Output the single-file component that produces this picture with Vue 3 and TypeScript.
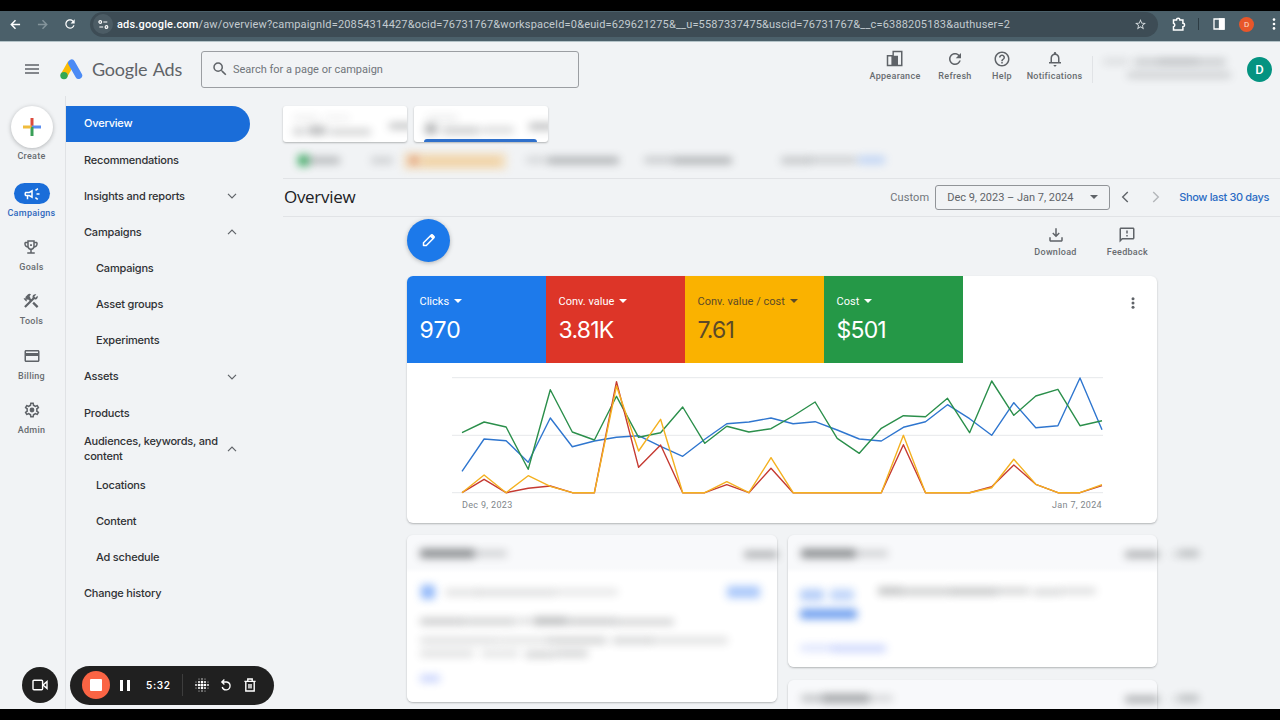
<script setup lang="ts">
interface NavItem {
  label: string
  child?: boolean
  active?: boolean
  chevron?: 'down' | 'up'
}
interface Smudge {
  x: number
  y: number
  w: number
  h: number
  c: string
  o: number
}

const icons: Record<string, string> = {
  search:
    'M15.5 14h-.79l-.28-.27A6.471 6.471 0 0 0 16 9.5 6.5 6.5 0 1 0 9.5 16c1.61 0 3.09-.59 4.23-1.57l.27.28v.79l5 4.99L20.49 19l-4.99-5zm-6 0C7.01 14 5 11.99 5 9.5S7.01 5 9.5 5 14 7.01 14 9.5 11.99 14 9.5 14z',
  reload:
    'M17.65 6.35C16.2 4.9 14.21 4 12 4c-4.42 0-7.99 3.58-7.99 8s3.57 8 7.99 8c3.73 0 6.84-2.55 7.73-6h-2.08c-.82 2.33-3.04 4-5.65 4-3.31 0-6-2.69-6-6s2.69-6 6-6c1.66 0 3.14.69 4.22 1.78L13 11h7V4l-2.35 2.35z',
  help:
    'M11 18h2v-2h-2v2zm1-16C6.48 2 2 6.48 2 12s4.48 10 10 10 10-4.48 10-10S17.52 2 12 2zm0 18c-4.41 0-8-3.59-8-8s3.59-8 8-8 8 3.59 8 8-3.59 8-8 8zm0-14c-2.21 0-4 1.79-4 4h2c0-1.1.9-2 2-2s2 .9 2 2c0 2-3 1.75-3 5h2c0-2.25 3-2.5 3-5 0-2.21-1.79-4-4-4z',
  bell:
    'M12 22c1.1 0 2-.9 2-2h-4c0 1.1.9 2 2 2zm6-6v-5c0-3.07-1.63-5.64-4.5-6.32V4c0-.83-.67-1.5-1.5-1.5s-1.5.67-1.5 1.5v.68C7.64 5.36 6 7.92 6 11v5H4v2h16v-2h-2zm-2 0H8v-5c0-2.48 1.51-4.5 4-4.5s4 2.02 4 4.5v5z',
  appearance:
    'M8.6 1h13.4v20.5H1V6.5h7.6zM10.5 3v4.5h5.5v12h4V3zM3 8.5v11h4.2v-11z',
  campaigns:
    'M18 11v2h4v-2h-4zm-2 6.61c.96.71 2.21 1.65 3.2 2.39.4-.53.8-1.07 1.2-1.6-.99-.74-2.24-1.68-3.2-2.4-.4.54-.8 1.08-1.2 1.61zM20.4 5.6c-.4-.53-.8-1.07-1.2-1.6-.99.74-2.24 1.68-3.2 2.4.4.53.8 1.07 1.2 1.6.96-.72 2.21-1.65 3.2-2.4zM4 9c-1.1 0-2 .9-2 2v2c0 1.1.9 2 2 2h1v4h2v-4h1l5 3V6L8 9H4zm5.03 1.71L11 9.53v4.94l-1.97-1.18-.48-.29H4v-2h4.55l.48-.29z',
  goals:
    'M19 5h-2V3H7v2H5c-1.1 0-2 .9-2 2v1c0 2.55 1.92 4.63 4.39 4.94.63 1.5 1.98 2.63 3.61 2.96V19H7v2h10v-2h-4v-3.1c1.63-.33 2.98-1.46 3.61-2.96C19.08 12.63 21 10.55 21 8V7c0-1.1-.9-2-2-2zM5 8V7h2v3.82C5.84 10.4 5 9.3 5 8zm7 6c-1.65 0-3-1.35-3-3V5h6v6c0 1.65-1.35 3-3 3zm7-6c0 1.3-.84 2.4-2 2.82V7h2v1zM10.8 8.3h2.4v2.4h-2.4z',
  tools:
    'M13.783 15.172l2.121-2.121 5.996 5.996-2.121 2.121zM17.5 10c1.93 0 3.5-1.57 3.5-3.5 0-.58-.16-1.12-.41-1.6l-2.7 2.7-1.49-1.49 2.7-2.7c-.48-.25-1.02-.41-1.6-.41C15.57 3 14 4.57 14 6.5c0 .41.08.8.21 1.16l-1.85 1.85-1.78-1.78.71-.71-1.41-1.41L12 3.49a3 3 0 0 0-4.24 0L4.22 7.03l1.41 1.41H2.81l-.71.71 3.54 3.54.71-.71V9.15l1.41 1.41.71-.71 1.78 1.78-7.41 7.41 2.12 2.12L16.34 9.79c.36.13.75.21 1.16.21z',
  billing:
    'M20 4H4c-1.11 0-1.99.89-1.99 2L2 18c0 1.11.89 2 2 2h16c1.11 0 2-.89 2-2V6c0-1.11-.89-2-2-2zm0 14H4v-6h16v6zm0-10H4V6h16v2z',
  admin:
    'M19.43 12.98c.04-.32.07-.64.07-.98s-.03-.66-.07-.98l2.11-1.65c.19-.15.24-.42.12-.64l-2-3.46c-.09-.16-.26-.25-.44-.25-.06 0-.12.01-.17.03l-2.49 1c-.52-.4-1.08-.73-1.69-.98l-.38-2.65C14.46 2.18 14.25 2 14 2h-4c-.25 0-.46.18-.49.42l-.38 2.65c-.61.25-1.17.59-1.69.98l-2.49-1c-.06-.02-.12-.03-.18-.03-.17 0-.34.09-.43.25l-2 3.46c-.13.22-.07.49.12.64l2.11 1.65c-.04.32-.07.65-.07.98s.03.66.07.98l-2.11 1.65c-.19.15-.24.42-.12.64l2 3.46c.09.16.26.25.44.25.06 0 .12-.01.17-.03l2.49-1c.52.4 1.08.73 1.69.98l.38 2.65c.03.24.24.42.49.42h4c.25 0 .46-.18.49-.42l.38-2.65c.61-.25 1.17-.59 1.69-.98l2.49 1c.06.02.12.03.18.03.17 0 .34-.09.43-.25l2-3.46c.12-.22.07-.49-.12-.64l-2.11-1.65zm-1.98-1.71c.04.31.05.52.05.73 0 .21-.02.43-.05.73l-.14 1.13.89.7 1.08.84-.7 1.21-1.27-.51-1.04-.42-.9.68c-.43.32-.84.56-1.25.73l-1.06.43-.16 1.13-.2 1.35h-1.4l-.19-1.35-.16-1.13-1.06-.43c-.43-.18-.83-.41-1.23-.71l-.91-.7-1.06.43-1.27.51-.7-1.21 1.08-.84.89-.7-.14-1.13c-.03-.31-.05-.54-.05-.74s.02-.43.05-.73l.14-1.13-.89-.7-1.08-.84.7-1.21 1.27.51 1.04.42.9-.68c.43-.32.84-.56 1.25-.73l1.06-.43.16-1.13.2-1.35h1.39l.19 1.35.16 1.13 1.06.43c.43.18.83.41 1.23.71l.91.7 1.06-.43 1.27-.51.7 1.21-1.07.85-.89.7.14 1.13zM12 8.8a3.2 3.2 0 1 0 0 6.4 3.2 3.2 0 0 0 0-6.4z',
  star:
    'M22 9.24l-7.19-.62L12 2 9.19 8.63 2 9.24l5.46 4.73L5.82 21 12 17.27 18.18 21l-1.63-7.03L22 9.24zM12 15.4l-3.76 2.27 1-4.28-3.32-2.88 4.38-.38L12 6.1l1.71 4.04 4.38.38-3.32 2.88 1 4.28L12 15.4z',
  feedback:
    'M20 2H4c-1.1 0-1.99.9-1.99 2L2 22l4-4h14c1.1 0 2-.9 2-2V4c0-1.1-.9-2-2-2zm0 14H5.17L4 17.17V4h16v12zM11 12h2v2h-2zm0-6h2v4h-2z',
  download:
    'M11 3h2v8.2l2.6-2.6L17 10l-5 5-5-5 1.4-1.4 2.6 2.6zM3 15h2v4h14v-4h2v4c0 1.1-.9 2-2 2H5c-1.1 0-2-.9-2-2z',
}

const headerTools = [
  { icon: 'appearance', label: 'Appearance', cls: 't-appearance' },
  { icon: 'reload', label: 'Refresh', cls: 't-refresh' },
  { icon: 'help', label: 'Help', cls: 't-help' },
  { icon: 'bell', label: 'Notifications', cls: 't-bell' },
]

const rail = [
  { icon: 'goals', label: 'Goals' },
  { icon: 'tools', label: 'Tools' },
  { icon: 'billing', label: 'Billing' },
  { icon: 'admin', label: 'Admin' },
]

const nav: NavItem[] = [
  { label: 'Overview', active: true },
  { label: 'Recommendations' },
  { label: 'Insights and reports', chevron: 'down' },
  { label: 'Campaigns', chevron: 'up' },
  { label: 'Campaigns', child: true },
  { label: 'Asset groups', child: true },
  { label: 'Experiments', child: true },
  { label: 'Assets', chevron: 'down' },
  { label: 'Products' },
  { label: 'Audiences, keywords, and content', chevron: 'up' },
  { label: 'Locations', child: true },
  { label: 'Content', child: true },
  { label: 'Ad schedule', child: true },
  { label: 'Change history' },
]

const metrics = [
  { label: 'Clicks', value: '970', cls: 'blue' },
  { label: 'Conv. value', value: '3.81K', cls: 'red' },
  { label: 'Conv. value / cost', value: '7.61', cls: 'yellow' },
  { label: 'Cost', value: '$501', cls: 'green' },
]

const baseline = 129.7
const series: { color: string; values: number[] }[] = [
  {
    color: '#2f76cf',
    values: [
      108.3, 76, 77.7, 99.3, 55, 83.7, 78, 74.3, 72.7, 83.3, 93.3, 76.3, 60.7, 59, 55, 60.7, 58.7,
      67, 76, 78, 64.3, 58.7, 41.7, 55.7, 72.3, 39.7, 64.7, 62.7, 15, 66.7,
    ],
  },
  {
    color: '#2b8f4b',
    values: [
      69.7, 59, 64, 106.3, 26.7, 69, 77, 33.3, 74.3, 69.7, 44, 80.3, 63.3, 69, 65.7, 53, 39, 75.3,
      90.3, 65.3, 52.7, 53.7, 35.3, 69.7, 18, 52.3, 33, 26.3, 62.7, 57.7,
    ],
  },
  {
    color: '#c53a32',
    values: [
      baseline, 116.3, baseline, 125.3, 123, baseline, baseline, 18.7, 104.3, 82, baseline, baseline,
      121.7, baseline, 105.3, baseline, baseline, baseline, baseline, baseline, 81.7, baseline,
      baseline, baseline, 123.7, 102, 121.3, baseline, baseline, 122.7,
    ],
  },
  {
    color: '#f4b120',
    values: [
      baseline, 112, baseline, 112.7, 123.3, baseline, baseline, 23, 88, 56.3, baseline, baseline,
      118.7, baseline, 94.7, baseline, baseline, baseline, baseline, baseline, 72.3, baseline,
      baseline, baseline, 124.7, 96.3, 121.3, baseline, baseline, 121.7,
    ],
  },
]
const toPoints = (values: number[]): string =>
  values.map((v, i) => `${(55 + i * 22.07).toFixed(1)},${v}`).join(' ')

const s = (x: number, y: number, w: number, h: number, o: number, c = '#3c4043'): Smudge => ({
  x, y, w, h, c, o,
})

const account = [s(5, 8, 26, 5, 0.16), s(36, 8, 92, 6, 0.26), s(29, 21, 104, 6, 0.22), s(60, 7, 40, 6, 0.1)]
const tabOne = [s(10, 10, 26, 4, 0.12), s(40, 10, 27, 4, 0.1), s(10, 22, 12, 7, 0.26), s(25, 20, 18, 9, 0.36), s(46, 23, 42, 6, 0.26), s(106, 17, 26, 6, 0.34)]
const tabTwo = [s(12, 10, 32, 4, 0.14), s(11, 18, 12, 10, 0.42), s(28, 21, 38, 7, 0.28), s(68, 21, 32, 6, 0.22), s(115, 17, 26, 7, 0.34)]
const status = [
  s(15, 3, 11, 11, 0.85, '#1e9e4a'), s(25, 5, 32, 7, 0.34), s(88, 5, 22, 7, 0.2),
  s(120, 0, 104, 18, 0.22, '#fbb03b'), s(126, 4, 10, 9, 0.5, '#d4622a'), s(138, 6, 80, 7, 0.34, '#e9a23b'),
  s(243, 5, 20, 6, 0.18), s(264, 5, 72, 7, 0.38), s(361, 5, 30, 6, 0.26), s(390, 5, 59, 7, 0.38),
  s(498, 5, 30, 7, 0.26), s(526, 5, 48, 6, 0.23), s(575, 4, 27, 8, 0.28, '#4285f4'),
]
const cardHead = [s(13, 14, 55, 9, 0.6), s(68, 15, 32, 7, 0.22), s(337, 16, 34, 7, 0.42)]
const cardHeadWide = [...cardHead, s(383, 17, 6, 5, 0.14), s(390, 15, 21, 7, 0.32)]
const optimisation = [
  s(14, 50, 14, 14, 0.62, '#4c8bf5'), s(38, 54, 34, 7, 0.16), s(70, 54, 78, 7, 0.18), s(147, 54, 64, 6, 0.15),
  s(320, 51, 33, 12, 0.48, '#4c8bf5'),
  s(13, 83, 44, 7, 0.28), s(56, 83, 54, 7, 0.24), s(112, 83, 12, 6, 0.22), s(126, 82, 35, 8, 0.36), s(161, 83, 49, 7, 0.28), s(209, 84, 58, 6, 0.26),
  s(13, 102, 78, 7, 0.17), s(91, 102, 50, 7, 0.15), s(140, 102, 60, 7, 0.24), s(205, 102, 40, 7, 0.22), s(243, 102, 78, 7, 0.16),
  s(13, 115, 54, 7, 0.17), s(74, 115, 38, 7, 0.15), s(118, 116, 30, 7, 0.24), s(148, 115, 33, 7, 0.24),
  s(13, 140, 20, 7, 0.32, '#4c6ff5'),
]
const score = [
  s(12, 54, 24, 12, 0.38, '#3f7fee'), s(42, 54, 24, 12, 0.32, '#3f7fee'), s(12, 74, 57, 10, 0.7, '#2f74e8'),
  s(90, 52, 24, 8, 0.32), s(113, 53, 50, 7, 0.27), s(162, 53, 47, 7, 0.32), s(208, 53, 34, 6, 0.26), s(245, 54, 28, 6, 0.24), s(272, 53, 36, 6, 0.2),
  s(12, 110, 34, 6, 0.22, '#4c6ff5'), s(44, 110, 54, 7, 0.3, '#4c6ff5'),
]
const lastHead = [s(13, 15, 24, 7, 0.3), s(35, 14, 46, 9, 0.46), s(79, 15, 26, 7, 0.18), s(337, 16, 34, 7, 0.42), s(383, 17, 6, 5, 0.14), s(390, 15, 21, 7, 0.32)]
const dots = [
  [0, -6, 0.7], [-3, -6, 0.5], [3, -6, 0.5], [-6, 0, 0.9], [6, 0, 0.9], [-6, -3, 0.5], [6, -3, 0.5], [-6, 3, 0.5], [6, 3, 0.5],
  [-3, -3, 1], [0, -3, 1.3], [3, -3, 1], [-3, 0, 1.3], [0, 0, 1.6], [3, 0, 1.3], [-3, 3, 1], [0, 3, 1.3], [3, 3, 1],
  [0, 6, 0.7], [-3, 6, 0.5], [3, 6, 0.5],
]
</script>

<template>
  <div class="screen">
    <div class="browser">
      <svg class="b-back" viewBox="0 0 12 12"><path d="M11 6H1.5M6 1.3L1.4 6 6 10.7" /></svg>
      <svg class="b-forward" viewBox="0 0 12 12"><path d="M1 6h9.5M6 1.3L10.6 6 6 10.7" /></svg>
      <svg class="b-reload" viewBox="0 0 24 24"><path :d="icons.reload" /></svg>
      <div class="omnibox">
        <span class="site-info">
          <svg viewBox="0 0 12 10"><circle cx="2.4" cy="2.2" r="1.5" /><path d="M5.8 2.2h4.4M1.4 7.8h4.2" /><circle cx="9.3" cy="7.8" r="1.5" /></svg>
        </span>
        <span class="url"><b>ads.google.com</b>/aw/overview?campaignId=20854314427&amp;ocid=76731767&amp;workspaceId=0&amp;euid=629621275&amp;__u=5587337475&amp;uscid=76731767&amp;__c=6388205183&amp;authuser=2</span>
        <svg class="b-star" viewBox="0 0 24 24"><path :d="icons.star" /></svg>
      </div>
      <svg class="b-puzzle" viewBox="0 0 14 14"><path d="M1.5 3h3a1.7 1.7 0 0 1 3.4 0h3v3.3a1.7 1.7 0 0 1 0 3.4V13H1.5V9.8a1.9 1.9 0 0 0 0-3.6z" /></svg>
      <span class="b-rule"></span>
      <svg class="b-panel" viewBox="0 0 12 12"><path d="M1 1h10v10H1z" fill="none" /><path d="M6.5 1H11v10H6.5z" fill="#fff" /></svg>
      <span class="b-avatar">D</span>
      <svg class="b-more" viewBox="0 0 4 12"><circle cx="2" cy="1.6" r="1.3" /><circle cx="2" cy="6" r="1.3" /><circle cx="2" cy="10.4" r="1.3" /></svg>
    </div>

    <div class="app">
      <header class="header">
        <svg class="menu" viewBox="0 0 14 10"><path d="M0 1h14M0 5h14M0 9h14" /></svg>
        <svg class="logo" viewBox="0 0 23 21">
          <path d="M11 4.2L4 16.5" stroke="#fbbc04" stroke-width="7" />
          <path d="M11.6 4L18.7 16.4" stroke="#4c8bf5" stroke-width="7" stroke-linecap="round" />
          <circle cx="4" cy="16.6" r="3.7" fill="#34a853" />
        </svg>
        <span class="brand">Google <i>Ads</i></span>
        <div class="searchbox">
          <svg viewBox="0 0 24 24"><path :d="icons.search" /></svg>
          <span>Search for a page or campaign</span>
        </div>
        <div class="tools">
          <div v-for="t in headerTools" :key="t.label" class="tool" :class="t.cls">
            <svg viewBox="0 0 24 24"><path fill-rule="evenodd" :d="icons[t.icon]" /></svg>
            <span>{{ t.label }}</span>
          </div>
        </div>
        <span class="h-rule"></span>
        <svg class="account smudges" viewBox="0 0 140 36"><rect v-for="(r, i) in account" :key="i" :x="r.x" :y="r.y" :width="r.w" :height="r.h" :fill="r.c" :opacity="r.o" rx="2" /></svg>
        <span class="avatar">D</span>
      </header>

      <div class="body">
        <aside class="rail">
          <div class="create">
            <svg viewBox="0 0 18 18">
              <path d="M7.5 0h3v9h-3z" fill="#dc4a3d" /><path d="M9 7.5h9v3H9z" fill="#5b8def" />
              <path d="M7.5 9h3v9h-3z" fill="#3a9f58" /><path d="M0 7.5h9l-1.5 3H0z" fill="#f0bc3c" />
            </svg>
          </div>
          <span class="rail-label">Create</span>
          <div class="pill"><svg viewBox="0 0 24 24"><path :d="icons.campaigns" /></svg></div>
          <span class="rail-label on">Campaigns</span>
          <div v-for="r in rail" :key="r.label" class="rail-item">
            <svg viewBox="0 0 24 24"><path :d="icons[r.icon]" /></svg>
            <span class="rail-label">{{ r.label }}</span>
          </div>
        </aside>

        <nav class="nav">
          <div v-for="(n, i) in nav" :key="i" class="nav-item" :class="{ active: n.active, child: n.child }">
            <span>{{ n.label }}</span>
            <svg v-if="n.chevron" viewBox="0 0 10 6"><path :d="n.chevron === 'down' ? 'M1 .8L5 4.8 9 .8' : 'M1 5.2L5 1.2 9 5.2'" /></svg>
          </div>
        </nav>

        <main class="main">
          <div class="tabs">
            <div class="tab"><svg class="smudges" viewBox="0 0 125 36"><rect v-for="(r, i) in tabOne" :key="i" :x="r.x" :y="r.y" :width="r.w" :height="r.h" :fill="r.c" :opacity="r.o" rx="2" /></svg></div>
            <div class="tab second"><svg class="smudges" viewBox="0 0 134 36"><rect v-for="(r, i) in tabTwo" :key="i" :x="r.x" :y="r.y" :width="r.w" :height="r.h" :fill="r.c" :opacity="r.o" rx="2" /></svg><span class="underline"></span></div>
          </div>
          <div class="status"><svg class="smudges" viewBox="0 0 620 18"><rect v-for="(r, i) in status" :key="i" :x="r.x" :y="r.y" :width="r.w" :height="r.h" :fill="r.c" :opacity="r.o" rx="2" /></svg></div>

          <div class="titlebar">
            <h1>Overview</h1>
            <span class="custom">Custom</span>
            <div class="range"><span>Dec 9, 2023 – Jan 7, 2024</span><svg viewBox="0 0 8 4"><path d="M0 0h8L4 4z" /></svg></div>
            <svg class="step" viewBox="0 0 8 13"><path d="M7 1L1.5 6.5 7 12" /></svg>
            <svg class="step off" viewBox="0 0 8 13"><path d="M1 1l5.5 5.5L1 12" /></svg>
            <a>Show last 30 days</a>
          </div>

          <div class="content">
            <div class="actions">
              <div class="fab"><svg viewBox="0 0 24 24"><path d="M4 20v-4.5L16 3.6a1.7 1.7 0 0 1 2.4 0l2 2a1.7 1.7 0 0 1 0 2.4L8.5 20z" fill="none" stroke="#fff" stroke-width="2.4" stroke-linejoin="round" /><path d="M14.2 5.4L17 2.7a1.8 1.8 0 0 1 2.4 0l2 2a1.8 1.8 0 0 1 0 2.4l-2.7 2.7z" fill="#fff" /></svg></div>
              <div class="action download"><svg viewBox="0 0 24 24"><path :d="icons.download" /></svg><span>Download</span></div>
              <div class="action"><svg viewBox="0 0 24 24"><path :d="icons.feedback" /></svg><span>Feedback</span></div>
            </div>

            <section class="card summary">
              <div class="metrics">
                <div v-for="m in metrics" :key="m.label" class="metric" :class="m.cls">
                  <div class="m-label">{{ m.label }}<svg viewBox="0 0 8 4"><path d="M0 0h8L4 4z" /></svg></div>
                  <div class="m-value">{{ m.value }}</div>
                </div>
                <svg class="kebab" viewBox="0 0 4 12"><circle cx="2" cy="1.7" r="1.5" /><circle cx="2" cy="6" r="1.5" /><circle cx="2" cy="10.3" r="1.5" /></svg>
              </div>
              <svg class="chart" viewBox="0 0 750 135">
                <path d="M45 14.7h651M45 72.3h651M45 129.7h651" stroke="#e6e8ea" stroke-width="1" />
                <polyline v-for="l in series" :key="l.color" :points="toPoints(l.values)" :stroke="l.color" />
              </svg>
              <div class="axis"><span>Dec 9, 2023</span><span>Jan 7, 2024</span></div>
            </section>

            <div class="columns">
              <section class="card tall"><svg class="smudges" viewBox="0 0 370 167"><rect v-for="(r, i) in [...cardHead, ...optimisation]" :key="i" :x="r.x" :y="r.y" :width="r.w" :height="r.h" :fill="r.c" :opacity="r.o" rx="2" /></svg></section>
              <div class="column">
                <section class="card short"><svg class="smudges" viewBox="0 0 370 167"><rect v-for="(r, i) in [...cardHeadWide, ...score]" :key="i" :x="r.x" :y="r.y" :width="r.w" :height="r.h" :fill="r.c" :opacity="r.o" rx="2" /></svg></section>
                <section class="card short"><svg class="smudges" viewBox="0 0 370 167"><rect v-for="(r, i) in lastHead" :key="i" :x="r.x" :y="r.y" :width="r.w" :height="r.h" :fill="r.c" :opacity="r.o" rx="2" /></svg></section>
              </div>
            </div>
          </div>
        </main>
      </div>

      <div class="recorder">
        <div class="camera"><svg viewBox="0 0 16 12"><rect x="1" y="1.2" width="9.6" height="9.6" rx="1" /><path d="M11 6l4-3.4v6.8z" /></svg></div>
        <div class="controls">
          <span class="stop"></span>
          <span class="pause"></span>
          <span class="time">5:32</span>
          <span class="divider"></span>
          <svg class="r-dots" viewBox="-7 -7 14 14"><circle v-for="(d, i) in dots" :key="i" :cx="d[0]" :cy="d[1]" :r="d[2]" /></svg>
          <svg class="r-undo" viewBox="0 0 12 12"><path d="M1.8 3h5a4 4 0 1 1-4.6 5M4.4.5L1.8 3l2.6 2.5" /></svg>
          <svg class="r-trash" viewBox="0 0 12 14"><path d="M.4 3.4h11.2M3.8 3V1h4.4v2M1.8 3.6V13h8.4V3.6M5 6v4.6M7 6v4.6" /></svg>
        </div>
      </div>
    </div>
  </div>
</template>

<style>
html,
body {
  background: #000;
  overflow: hidden;
}
</style>

<style scoped>
* {
  box-sizing: border-box;
}
svg {
  display: block;
  flex: none;
}
.screen {
  width: 1280px;
  height: 720px;
  padding: 11px 0;
  background: #000;
  display: flex;
  flex-direction: column;
  font-family: Roboto, sans-serif;
  color: #202124;
  overflow: hidden;
}
.browser {
  height: 31px;
  flex: none;
  display: flex;
  align-items: center;
  padding: 0 4px 4px 10px;
  background: #4b606a;
  border-bottom: 1px solid #b4c3c8;
}
.b-back,
.b-forward {
  width: 11px;
  height: 11px;
  fill: none;
  stroke: #fff;
  stroke-width: 1.6;
}
.b-forward {
  margin-left: 16px;
  stroke: #84949b;
}
.b-reload {
  width: 14px;
  height: 14px;
  margin-left: 15px;
  fill: #fff;
}
.omnibox {
  width: 1068px;
  height: 25px;
  margin-left: 13px;
  padding: 0 11px 0 3px;
  display: flex;
  align-items: center;
  border-radius: 13px;
  background: #3d4c55;
}
.site-info {
  width: 20px;
  height: 20px;
  border-radius: 50%;
  background: #4c5c65;
  display: flex;
  align-items: center;
  justify-content: center;
}
.site-info svg {
  width: 11px;
  height: 9px;
  fill: none;
  stroke: #fff;
  stroke-width: 1.3;
}
.url {
  margin-left: 4px;
  flex: 1;
  font-size: 11px;
  letter-spacing: 0.166px;
  color: #c3cbd0;
  white-space: nowrap;
}
.url b {
  font-weight: 500;
  color: #fff;
}
.b-star {
  width: 13px;
  height: 13px;
  fill: #d5dcdf;
}
.b-puzzle {
  width: 14px;
  height: 14px;
  margin-left: 14px;
  fill: none;
  stroke: #fff;
  stroke-width: 1.5;
}
.b-rule {
  width: 1px;
  height: 12px;
  margin-left: 12px;
  background: #2d3c44;
}
.b-panel {
  width: 12px;
  height: 12px;
  margin-left: 14px;
  stroke: #fff;
  stroke-width: 1.3;
}
.b-avatar {
  width: 15px;
  height: 15px;
  margin-left: 14px;
  border-radius: 50%;
  background: #e8562a;
  color: #fde0d4;
  font-size: 8px;
  line-height: 15px;
  text-align: center;
}
.b-more {
  width: 4px;
  height: 12px;
  margin-left: 17.5px;
  fill: #fff;
}
.app {
  position: relative;
  height: 667px;
  background: #f1f3f5;
  overflow: hidden;
}
.header {
  height: 54px;
  display: flex;
  align-items: center;
  padding: 0 8px 0 25px;
}
.menu {
  width: 14px;
  height: 10px;
  stroke: #5f6368;
  stroke-width: 1.3;
}
.logo {
  width: 23px;
  height: 21px;
  margin-left: 21px;
  fill: none;
}
.brand {
  width: 109px;
  margin-left: 9px;
  font: 400 18px Lato, sans-serif;
  letter-spacing: -0.2px;
  color: #5f6368;
  white-space: nowrap;
}
.brand i {
  font-style: normal;
  margin-left: 1px;
}
.searchbox {
  width: 378px;
  height: 37px;
  display: flex;
  align-items: center;
  padding-left: 9px;
  border: 1px solid #9b9ea2;
  border-radius: 3px;
  font-size: 11px;
  letter-spacing: 0;
  color: #70757a;
}
.searchbox svg {
  width: 18px;
  height: 18px;
  margin-right: 4px;
  fill: #5f6368;
}
.tools {
  margin: -5px 0 0 290px;
  display: flex;
  height: 34px;
}
.tool,
.action {
  display: flex;
  flex-direction: column;
  align-items: center;
  font-size: 9px;
  font-weight: 500;
  letter-spacing: 0.3px;
  line-height: 11px;
  color: #686c70;
}
.tool svg {
  width: 18px;
  height: 18px;
  margin-bottom: 3px;
  fill: #5f6368;
}
.t-appearance {
  width: 52px;
}
.t-refresh {
  width: 34px;
  margin-left: 17px;
}
.t-help {
  width: 24px;
  margin-left: 18px;
}
.t-bell {
  width: 58px;
  margin-left: 11.5px;
}
.tool span {
  white-space: nowrap;
}
.h-rule {
  width: 1px;
  height: 27px;
  margin-left: 8.5px;
  background: #e1e3e6;
}
.account {
  width: 140px;
  height: 36px;
  margin-left: 5px;
}
.avatar {
  width: 25px;
  height: 25px;
  margin-left: auto;
  border-radius: 50%;
  background: #049381;
  color: #fff;
  font-size: 13px;
  font-weight: 500;
  line-height: 25px;
  text-align: center;
}
.smudges {
  overflow: visible;
}
.smudges rect {
  filter: blur(4.3px);
}
.body {
  display: flex;
  height: 613px;
}
.rail {
  width: 66px;
  flex: none;
  display: flex;
  flex-direction: column;
  align-items: center;
  padding: 10px 2px 0 0;
  border-right: 1px solid #e0e2e5;
}
.create {
  width: 42px;
  height: 42px;
  flex: none;
  display: flex;
  align-items: center;
  justify-content: center;
  border-radius: 50%;
  background: #fff;
  box-shadow: 0 1px 4px rgba(60, 64, 67, 0.35);
}
.create svg {
  width: 18px;
  height: 18px;
}
.rail-label {
  font-size: 9px;
  font-weight: 500;
  letter-spacing: 0.28px;
  line-height: 12px;
  color: #686c70;
}
.create + .rail-label {
  margin-top: 2px;
}
.pill {
  width: 36px;
  height: 21px;
  flex: none;
  margin: 21px 0 3px;
  display: flex;
  align-items: center;
  justify-content: center;
  border-radius: 11px;
  background: #1a6dd9;
}
.pill svg {
  width: 18px;
  height: 18px;
  fill: #fff;
}
.rail-label.on {
  color: #2f68bd;
}
.rail-item {
  height: 54.2px;
  flex: none;
  display: flex;
  flex-direction: column;
  align-items: center;
  justify-content: flex-end;
}
.rail-item svg {
  width: 18px;
  height: 18px;
  margin-bottom: 5px;
  fill: #5f6368;
}
.nav {
  width: 184px;
  flex: none;
  padding-top: 9.8px;
}
.nav-item {
  height: 36.17px;
  padding: 0 13px 0 18px;
  display: flex;
  align-items: center;
  justify-content: space-between;
  font: 500 11px/15px Inter, sans-serif;
  letter-spacing: -0.2px;
  color: #2f3134;
}
.nav-item.child {
  padding-left: 30px;
}
.nav-item.active {
  border-radius: 0 18px 18px 0;
  background: #1a6dd9;
  color: #fff;
}
.nav-item svg {
  width: 10px;
  height: 6px;
  fill: none;
  stroke: #5f6368;
  stroke-width: 1.2;
}
.main {
  flex: 1;
  padding-left: 33px;
}
.tabs {
  display: flex;
  gap: 7px;
  padding-top: 10px;
  height: 46px;
}
.tab {
  position: relative;
  width: 124px;
  height: 36px;
  border-radius: 3px;
  background: #fff;
  box-shadow: 0 1px 2px rgba(60, 64, 67, 0.35);
  overflow: hidden;
}
.tab.second {
  width: 134px;
}
.underline {
  position: absolute;
  left: 10px;
  bottom: 0;
  width: 113px;
  height: 3px;
  border-radius: 3px 3px 0 0;
  background: #2f70cb;
}
.tab .smudges {
  height: 36px;
}
.status {
  height: 36.5px;
  padding-top: 10px;
  border-bottom: 1px solid #e1e3e6;
}
.status .smudges {
  width: 620px;
  height: 18px;
}
.titlebar {
  height: 38px;
  display: flex;
  align-items: center;
  padding-right: 11px;
  border-bottom: 1px solid #e1e3e6;
}
h1 {
  flex: 1;
  margin: 0 0 1px 1px;
  font: 400 17px "Open Sans", sans-serif;
  letter-spacing: -0.3px;
}
.custom {
  margin-right: 6px;
  font-size: 11px;
  letter-spacing: 0.1px;
  color: #70757a;
}
.range {
  width: 175px;
  height: 25px;
  padding: 0 11px;
  display: flex;
  align-items: center;
  justify-content: space-between;
  border: 1px solid #919498;
  border-radius: 3px;
  font-size: 11px;
  letter-spacing: -0.02px;
  color: #5f6368;
}
.range svg {
  width: 8px;
  height: 4px;
  fill: #5f6368;
}
.step {
  width: 8px;
  height: 12px;
  margin-left: 11px;
  fill: none;
  stroke: #5f6368;
  stroke-width: 1.5;
}
.step.off {
  margin-left: 23px;
  margin-right: 19px;
  stroke: #b3b6ba;
}
.titlebar a {
  font: 500 11px Inter, sans-serif;
  letter-spacing: -0.36px;
  color: #2b6cc4;
}
.content {
  width: 750px;
  margin-left: 124px;
}
.actions {
  height: 59px;
  padding: 2px 9px 0 0;
  display: flex;
}
.fab {
  width: 43px;
  height: 43px;
  margin-right: auto;
  display: flex;
  align-items: center;
  justify-content: center;
  border-radius: 50%;
  background: #1c79ea;
  box-shadow: 0 1px 4px rgba(60, 64, 67, 0.35);
}
.fab svg {
  width: 15px;
  height: 15px;
}
.action {
  padding-top: 7px;
}
.action svg {
  width: 18px;
  height: 18px;
  margin-bottom: 3px;
  fill: #5f6368;
}
.action.download {
  margin-right: 30px;
}
.card {
  border-radius: 6px;
  background: #fff;
  box-shadow: 0 1px 2px rgba(60, 64, 67, 0.35);
}
.summary {
  height: 247.5px;
  overflow: hidden;
}
.metrics {
  display: flex;
  height: 87.5px;
}
.metric {
  width: 139px;
  padding: 18px 0 0 12.5px;
  color: #fff;
}
.m-label {
  display: flex;
  align-items: center;
  font-size: 11px;
  letter-spacing: 0.02px;
  line-height: 15px;
}
.m-label svg {
  width: 8px;
  height: 4px;
  margin-left: 5px;
  fill: currentColor;
}
.m-value {
  margin-top: 7px;
  font: 400 23px/29px Inter, sans-serif;
  letter-spacing: -0.8px;
}
.blue {
  background: #1d7aeb;
}
.blue .m-value {
  letter-spacing: 0.2px;
}
.red {
  background: #dd3528;
}
.yellow {
  background: #fab200;
  color: #5c4a28;
}
.green {
  background: #259847;
}
.kebab {
  width: 4px;
  height: 12px;
  margin: 21px 22.5px 0 auto;
  fill: #5f6368;
}
.chart {
  width: 750px;
  height: 135px;
}
.chart polyline {
  fill: none;
  stroke-width: 1.4;
  stroke-linejoin: round;
}
.axis {
  display: flex;
  justify-content: space-between;
  padding: 1px 55px 0 55px;
  font-size: 9px;
  letter-spacing: 0.33px;
  line-height: 12px;
  color: #80868b;
}
.columns {
  display: flex;
  gap: 11px;
  margin-top: 12px;
}
.column {
  display: flex;
  flex-direction: column;
  gap: 13px;
}
.tall,
.short {
  width: 369.5px;
  background: linear-gradient(#f8f9fb 33px, #fff 38px);
}
.tall {
  height: 167px;
}
.short {
  height: 132px;
}
.tall .smudges,
.short .smudges {
  width: 370px;
  height: 167px;
}
.recorder {
  position: absolute;
  left: 22px;
  bottom: 4.5px;
  display: flex;
  align-items: center;
  gap: 12px;
}
.camera {
  width: 36px;
  height: 36px;
  display: flex;
  align-items: center;
  justify-content: center;
  border-radius: 50%;
  background: #202020;
}
.camera svg {
  width: 16px;
  height: 12px;
  fill: none;
  stroke: #fff;
  stroke-width: 1.4;
}
.controls {
  width: 204px;
  height: 39px;
  display: flex;
  align-items: center;
  padding-left: 12px;
  border-radius: 20px;
  background: #202020;
}
.stop {
  width: 28px;
  height: 28px;
  display: flex;
  align-items: center;
  justify-content: center;
  border-radius: 50%;
  background: #fa6444;
}
.stop::before {
  content: '';
  width: 12px;
  height: 12px;
  border-radius: 1px;
  background: #fff;
}
.pause {
  width: 10px;
  height: 11px;
  margin-left: 10px;
  border: solid #fff;
  border-width: 0 3.4px;
}
.time {
  width: 25px;
  margin-left: 16px;
  font: 600 10px Inter, sans-serif;
  letter-spacing: 0.6px;
  color: #fff;
}
.divider {
  width: 1px;
  height: 22px;
  margin-left: 11px;
  background: #3d3d3d;
}
.r-dots {
  width: 14px;
  height: 14px;
  margin-left: 11.5px;
  fill: #fff;
}
.r-undo,
.r-trash {
  width: 12px;
  height: 12px;
  margin-left: 12.5px;
  fill: none;
  stroke: #fff;
  stroke-width: 1.3;
}
.r-undo {
  margin-left: 11px;
}
.r-trash {
  height: 14px;
  stroke-width: 1.4;
}
</style>
